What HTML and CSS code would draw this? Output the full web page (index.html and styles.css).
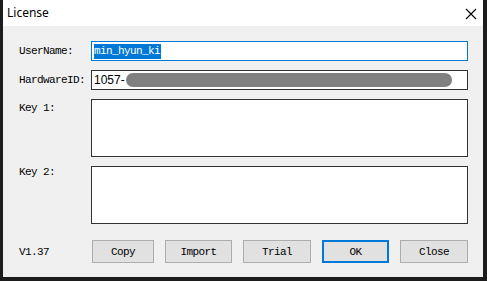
FILE: index.html
```html
<!DOCTYPE html>
<html lang="en">
<head>
  <meta charset="UTF-8">
  <title>License</title>
  <link rel="stylesheet" href="styles.css">
</head>
<body>
  <div class="window">
    <div class="titlebar">
      <span class="title">License</span>
      <svg class="close" width="12" height="12" viewBox="0 0 12 12">
        <path d="M1 1 L11 11 M11 1 L1 11" stroke="#000" stroke-width="1.1" fill="none"/>
      </svg>
    </div>
    <div class="content">
      <div class="row">
        <label class="lbl">UserName:</label>
        <div class="field focused"><span class="sel">min_hyun_ki</span></div>
      </div>
      <div class="row">
        <label class="lbl">HardwareID:</label>
        <div class="field"><span class="hwid">1057-</span><span class="blur"></span></div>
      </div>
      <div class="row top">
        <label class="lbl key1">Key 1:</label>
        <div class="field area"></div>
      </div>
      <div class="row top key2row">
        <label class="lbl key2">Key 2:</label>
        <div class="field area"></div>
      </div>
      <div class="row buttons">
        <span class="lbl">V1.37</span>
        <div class="btns">
          <button class="narrow">Copy</button>
          <button>Import</button>
          <button class="wide">Trial</button>
          <button class="default">OK</button>
          <button class="wide">Close</button>
        </div>
      </div>
    </div>
  </div>
</body>
</html>
```

FILE: styles.css
```css
body {
  margin: 0;
  background-color: #1c1c1c;
  width: 487px;
  height: 281px;
  overflow: hidden;
}
.window {
  margin-left: 3px;
  width: 480px;
  height: 277px;
  background-color: #f0f0f0;
}
.titlebar {
  height: 26px;
  background: #fff;
  display: flex;
  align-items: center;
  justify-content: space-between;
  padding: 0 6px 0 4px;
}
.title {
  font-family: "Noto Sans", "Open Sans", sans-serif;
  font-size: 12px;
  color: #000;
  margin-top: -1px;
}
.close {
  margin-top: 1px;
}
.content {
  padding: 15px 15px 0 16px;
}
.row {
  display: flex;
  align-items: center;
  margin-bottom: 9px;
}
.row.top {
  align-items: flex-start;
}
.key2row {
  margin-bottom: 16px;
}
.lbl {
  width: 72px;
  flex: none;
  font-family: "Liberation Mono", monospace;
  font-size: 11px;
  letter-spacing: -0.6px;
  color: #000;
}
.key1 {
  margin-top: 3px;
}
.field {
  height: 18px;
  background: #fff;
  border: 1px solid #333;
  display: flex;
  align-items: center;
  padding: 0 0 0 2px;
  box-sizing: content-box;
  width: 375px;
}
.field.focused {
  border-color: #0078d7;
}
.field.area {
  height: 56px;
}
.sel {
  background: #0078d7;
  color: #fff;
  font-family: "Liberation Mono", monospace;
  font-size: 11px;
  letter-spacing: -0.6px;
  line-height: 15px;
  padding-right: 1px;
}
.hwid {
  font-family: "Liberation Sans", Arial, sans-serif;
  font-size: 12px;
  color: #000;
}
.blur {
  width: 326px;
  height: 14px;
  background: #808080;
  border-radius: 7px;
  margin-left: 1px;
}
.buttons {
  margin-bottom: 0;
}
.btns {
  display: flex;
  gap: 11px;
  margin-left: 1px;
}
button {
  width: 67px;
  height: 23px;
  background: #e1e1e1;
  border: 1px solid #adadad;
  font-family: "Liberation Mono", monospace;
  font-size: 11px;
  letter-spacing: -0.6px;
  color: #000;
  padding: 0;
  margin: 0;
}
button.narrow {
  width: 62px;
}
button.wide {
  width: 68px;
}
button.default {
  border: 2px solid #0078d7;
}
```
